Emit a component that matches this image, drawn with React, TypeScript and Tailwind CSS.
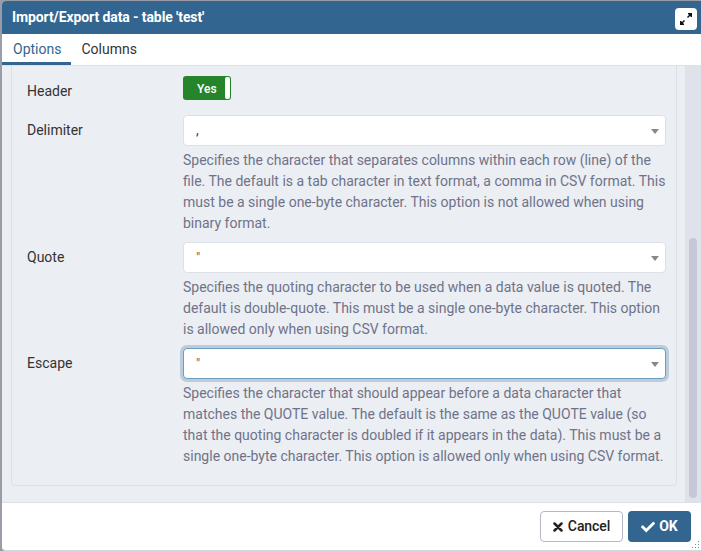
import React from "react";
import { FaCheck } from "react-icons/fa";

function Field({ label, value, lines, focused = false, quote = false }: {
  label: string; value: string; lines: string[]; focused?: boolean; quote?: boolean;
}) {
  return (
    <div className="mb-2 flex">
      <div className="w-[156px] shrink-0 pt-[5px] leading-[21px] text-[#333333]">{label}</div>
      <div className="w-[483px]">
        <div
          className={
            "flex h-[31px] items-center justify-between rounded-[4px] border bg-white pl-3 pr-[6px] text-[#444444] " +
            (focused ? "border-[#6b9dc2] shadow-[0_0_0_3px_#bacddd]" : "border-[#dde0e6]")
          }
        >
          <span className={quote ? "text-[13px] text-[#666666]" : "text-[14px]"}>{value}</span>
          <span className="mt-px h-0 w-0 border-x-4 border-t-[5px] border-x-transparent border-t-[#888888]" />
        </div>
        <div className="pt-1 leading-[21px] text-[#6f7389]">
          {lines.map((line) => (
            <div key={line} className="whitespace-nowrap">{line}</div>
          ))}
        </div>
      </div>
    </div>
  );
}

export default function App() {
  return (
    <div className="h-[551px] w-[701px] overflow-hidden bg-[#9a9ca8] pl-[2px] pt-px font-['Roboto',sans-serif] text-[14px]">
      <div className="relative flex h-[550px] flex-col overflow-hidden rounded-l-[4px] border-b border-[#d5d8e0] bg-white">
        <header className="flex h-[33px] shrink-0 items-center justify-between bg-[#326690] pl-[10px] pr-1 font-bold text-white">
          <span className="tracking-[-0.1px]">Import/Export data - table 'test'</span>
          <button className="mt-[3px] flex h-[22px] w-[22px] items-center justify-center rounded-[4px] bg-white">
            <svg width="14" height="14" viewBox="0 0 14 14" fill="#111">
              <path d="M9 1h4v4h-1l-1-1-2 2-1-1 2-2-1-1zM5 13H1V9h1l1 1 2-2 1 1-2 2 1 1z" />
            </svg>
          </button>
        </header>
        <nav className="flex h-8 shrink-0 border-b border-[#dde0e6] leading-[30px]">
          <div className="h-[31px] w-[69px] border-b-[3px] border-[#326690] pl-[11px] text-[#326690]">Options</div>
          <div className="pl-[10.5px] text-[#333333]">Columns</div>
        </nav>
        <main className="flex h-[436px] shrink-0 bg-[#ebeef3]">
          <section className="ml-[9px] h-[420px] w-[666px] rounded-b-[4px] border border-t-0 border-[#dde0e6] pl-[15px] pt-[9px]">
            <div className="mb-[14px] flex h-[26px]">
              <div className="w-[156px] pt-[6px] leading-[21px] text-[#333333]">Header</div>
              <div className="mt-px flex h-6 w-12 items-center justify-between rounded-[3px] bg-[#26852b] pl-[14px] pr-px text-[12px] font-medium text-white">
                <span className="pt-px">Yes</span><span className="h-[22px] w-[5px] rounded-[2px] bg-white" />
              </div>
            </div>
            <Field label="Delimiter" value="," lines={[
              "Specifies the character that separates columns within each row (line) of the",
              "file. The default is a tab character in text format, a comma in CSV format. This",
              "must be a single one-byte character. This option is not allowed when using",
              "binary format.",
            ]} />
            <Field label="Quote" value={'"'} quote lines={[
              "Specifies the quoting character to be used when a data value is quoted. The",
              "default is double-quote. This must be a single one-byte character. This option",
              "is allowed only when using CSV format.",
            ]} />
            <Field label="Escape" value={'"'} quote focused lines={[
              "Specifies the character that should appear before a data character that",
              "matches the QUOTE value. The default is the same as the QUOTE value (so",
              "that the quoting character is doubled if it appears in the data). This must be a",
              "single one-byte character. This option is allowed only when using CSV format.",
            ]} />
          </section>
          <div className="ml-2 flex-1 bg-[#dfe2ea] pl-1 pt-[172px]">
            <div className="h-[260px] w-2 rounded-full bg-[#c4c9d5]" />
          </div>
        </main>
        <footer className="flex h-12 items-start justify-end gap-[5px] border-t border-[#dde0e6] pr-[10px] pt-2 font-medium">
          <button className="flex h-[31px] w-[83px] items-center justify-center gap-[5px] rounded-[4px] border border-[#b5b8c4] text-[#222222]">
            <svg width="10" height="10" viewBox="0 0 10 10" stroke="currentColor" strokeWidth="2.5" strokeLinecap="round">
              <path d="M1.5 1.5l7 7M8.5 1.5l-7 7" />
            </svg>
            <span className="tracking-[-0.1px]">Cancel</span>
          </button>
          <button className="flex h-[31px] w-[63px] items-center justify-center gap-1 rounded-[4px] bg-[#326690] font-bold text-white">
            <FaCheck size={14} />OK
          </button>
        </footer>
        <svg className="absolute bottom-0 right-0" width="9" height="9" fill="#888">
          <path d="M6 0h1v1H6zM6 3h1v1H6zM6 6h1v1H6zM3 3h1v1H3zM3 6h1v1H3zM0 6h1v1H0z" />
        </svg>
      </div>
    </div>
  );
}
